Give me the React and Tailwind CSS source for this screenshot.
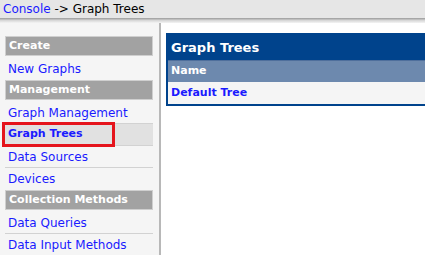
import React from 'react';

const menu = [
  { type: 'header', label: 'Create' },
  { type: 'link', label: 'New Graphs' },
  { type: 'header', label: 'Management' },
  { type: 'link', label: 'Graph Management' },
  { type: 'link', label: 'Graph Trees', selected: true },
  { type: 'link', label: 'Data Sources' },
  { type: 'link', label: 'Devices' },
  { type: 'header', label: 'Collection Methods' },
  { type: 'link', label: 'Data Queries' },
  { type: 'link', label: 'Data Input Methods' },
];

function Sidebar() {
  return (
    <div className="w-[161px] shrink-0 h-[232px] bg-[#f5f5f5] border-r-2 border-[#b8b8b8] pt-[13px] pl-[5px] pr-[6px]">
      {menu.map((item, i) => {
        if (item.type === 'header') {
          return (
            <div key={i} className="h-[22px] pb-[2px]">
              <div className="h-[20px] bg-[#a2a2a2] border border-[#cfcfcf] flex items-center pl-[3px] text-[11px] font-bold text-white">
                {item.label}
              </div>
            </div>
          );
        }
        const next = menu[i + 1];
        const line = next && next.type === 'link';
        return (
          <div
            key={i}
            className={`relative h-[22px] flex items-center pl-[3px] text-[#1a1aff] ${
              item.selected ? 'bg-[#e1e1e1] font-bold text-[11px]' : 'text-[12px]'
            } ${line ? 'border-b border-[#d2d2d2]' : ''}`}
          >
            {item.label}
            {item.selected && (
              <div className="absolute left-[-3px] top-[-2px] w-[113px] h-[25px] border-[3px] border-[#e5141c]" />
            )}
          </div>
        );
      })}
    </div>
  );
}

function TreePanel() {
  return (
    <div className="mt-[10px] ml-[5px] w-[300px] shrink-0 border-2 border-[#00438c]">
      <div className="h-[25px] bg-[#00438c] flex items-center pl-[3px] text-[13px] font-bold text-white">
        Graph Trees
      </div>
      <div className="h-[22px] bg-[#6d89ae] border-t border-[#4f6f9c] flex items-center pl-[3px] text-[11px] font-bold text-white">
        Name
      </div>
      <div className="h-[22px] bg-[#f5f5f5] flex items-center pl-[3px] text-[11px] font-bold text-[#1a1aff]">
        Default Tree
      </div>
    </div>
  );
}

export default function App() {
  return (
    <div className="w-[425px] h-[263px] overflow-hidden bg-white font-['DejaVu_Sans',Verdana,sans-serif]">
      <div className="h-[18px] bg-[#e6e6e6] flex items-center pl-[3px] text-[12px] text-black">
        <span className="text-[#1a1aff]">Console</span>
        <span>&nbsp;-&gt; Graph Trees</span>
      </div>
      <div className="h-[5px] bg-gradient-to-b from-[#9a9a9a] via-[#d8d8d8] to-[#f4f4f4]" />
      <div className="flex items-start">
        <Sidebar />
        <TreePanel />
      </div>
    </div>
  );
}
